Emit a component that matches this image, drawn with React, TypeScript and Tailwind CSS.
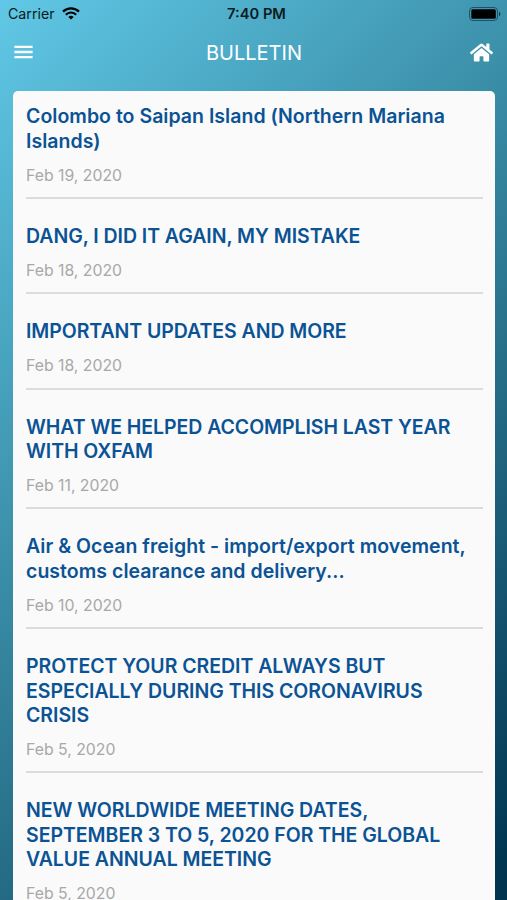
import { FaHome } from 'react-icons/fa';

const bulletins = [
  { lines: ['Colombo to Saipan Island (Northern Mariana', 'Islands)'], date: 'Feb 19, 2020', tracking: 'tracking-[0.02px]' },
  { lines: ['DANG, I DID IT AGAIN, MY MISTAKE'], date: 'Feb 18, 2020', tracking: 'tracking-[-0.05px]' },
  { lines: ['IMPORTANT UPDATES AND MORE'], date: 'Feb 18, 2020', tracking: 'tracking-[-0.06px]' },
  { lines: ['WHAT WE HELPED ACCOMPLISH LAST YEAR', 'WITH OXFAM'], date: 'Feb 11, 2020', tracking: 'tracking-[-0.06px]' },
  { lines: ['Air & Ocean freight - import/export movement,', 'customs clearance and delivery...'], date: 'Feb 10, 2020', tracking: 'tracking-[0.03px]' },
  { lines: ['PROTECT YOUR CREDIT ALWAYS BUT', 'ESPECIALLY DURING THIS CORONAVIRUS', 'CRISIS'], date: 'Feb 5, 2020', tracking: 'tracking-[-0.03px]' },
  { lines: ['NEW WORLDWIDE MEETING DATES,', 'SEPTEMBER 3 TO 5, 2020 FOR THE GLOBAL', 'VALUE ANNUAL MEETING'], date: 'Feb 5, 2020', tracking: 'tracking-[-0.03px]' },
];

const App = () => {
  return (
    <div className="h-[900px] w-full overflow-hidden flex flex-col bg-[linear-gradient(135deg,#60c8e6_0%,#3f95af_36%,#226781_66%,#00344f_98%)] font-['Inter','Liberation_Sans',sans-serif]">
      <div className="h-[28px] shrink-0 grid grid-cols-3 items-center pl-2 pr-[6px] text-[#0b1a20]">
        <div className="flex items-center gap-[7px] text-[14.2px]">
          <span>Carrier</span>
          <svg width="18" height="13" viewBox="0 0 18 13" fill="none" stroke="#000" strokeWidth="2.2">
            <path d="M1 4.6a11.3 11.3 0 0 1 16 0M3.8 7.7a7.3 7.3 0 0 1 10.4 0" />
            <path d="M9 12.6 6.3 10a3.8 3.8 0 0 1 5.4 0z" fill="#000" stroke="none" />
          </svg>
        </div>
        <span className="pl-[4px] text-center text-[14.7px] font-semibold">7:40 PM</span>
        <svg className="justify-self-end" width="32" height="14" viewBox="0 0 32 14">
          <rect x=".5" y=".5" width="28" height="13" rx="3.5" fill="none" stroke="#205264" />
          <rect x="2.3" y="2.2" width="24.5" height="9.6" rx="1.5" />
          <path d="M30 4.5q2.6 2.5 0 5z" fill="#16303a" />
        </svg>
      </div>

      <div className="h-[63px] shrink-0 flex items-center justify-between px-[14px] pb-[15px] text-white">
        <svg width="19" height="14" viewBox="0 0 19 14" stroke="#fff" strokeWidth="2.4">
          <path d="M.4 1.9h18.2M.4 7h18.2M.4 12.1h18.2" />
        </svg>
        <h1 className="pl-[5px] pt-px text-[20px]">BULLETIN</h1>
        <FaHome size={23} />
      </div>

      <div className="ml-[13px] mr-[12px] flex-1 min-h-0 overflow-hidden rounded-t-[5px] bg-[#fafafa] pl-[13px] pr-[12.5px]">
        {bulletins.map((item, idx) => (
          <div key={idx} className="border-b-2 border-[#dcdcdc] pt-[25px] pb-[11.4px] first:pt-[13.1px]">
            <h2 className={`text-[19.5px] leading-[24.4px] font-semibold text-[#0b5394] ${item.tracking}`}>
              {item.lines.map((line) => (
                <span key={line} className="block whitespace-nowrap">{line}</span>
              ))}
            </h2>
            <p className="mt-[12.6px] text-[15.8px] leading-[20px] text-[#a8a8a8]">{item.date}</p>
          </div>
        ))}
      </div>
    </div>
  );
};

export default App;
